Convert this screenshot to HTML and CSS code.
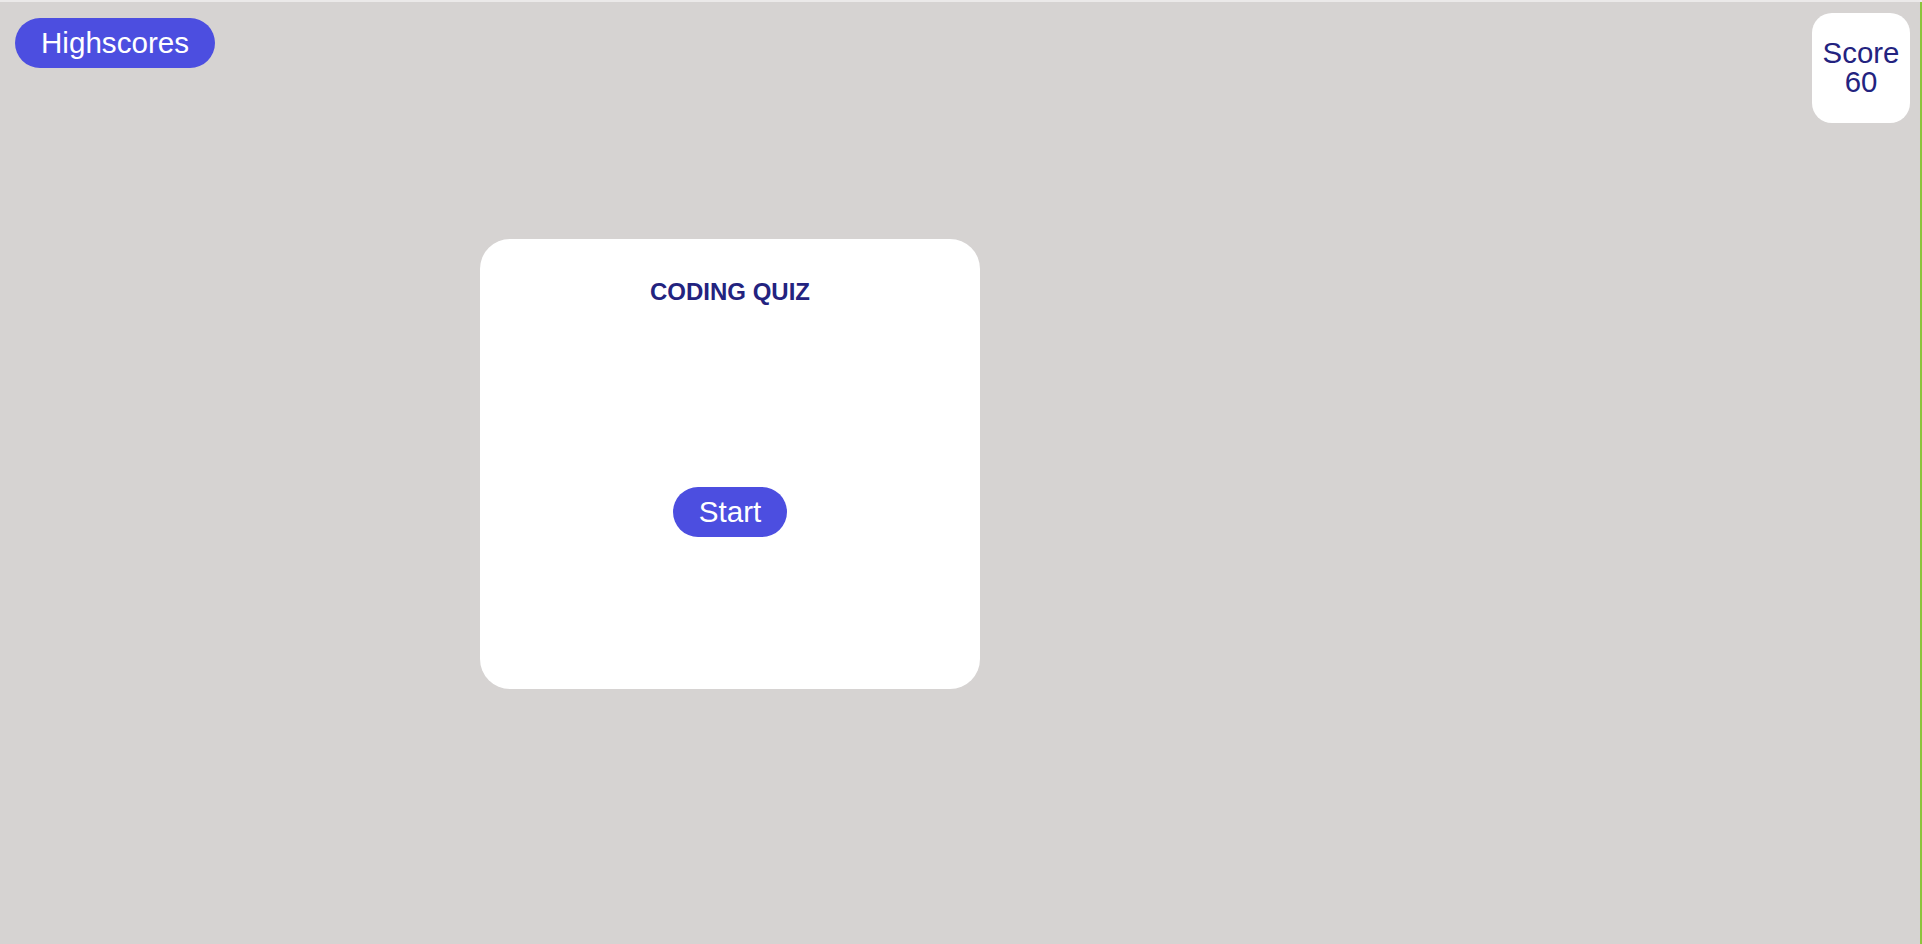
FILE: index.html
```html
<!DOCTYPE html>
<html lang="en">
<head>
<meta charset="utf-8">
<title>Coding Quiz</title>
<link rel="stylesheet" href="styles.css">
</head>
<body>
<div class="page">
  <div class="inner">
    <header class="top">
      <button class="pill highscores">Highscores</button>
      <div class="score">
        <span>Score</span>
        <span>60</span>
      </div>
    </header>
    <main class="main">
      <section class="card">
        <h1 class="title">CODING QUIZ</h1>
        <button class="pill start">Start</button>
      </section>
    </main>
  </div>
</div>
</body>
</html>
```
FILE: styles.css
```css
html, body {
  margin: 0;
  padding: 0;
}
body {
  background: #d6d3d2;
  font-family: "Liberation Sans", Arial, sans-serif;
  overflow: hidden;
}
.page {
  border-top: 2px solid #ebe9e9;
}
.inner {
  border-right: 2px solid #8cc43c;
  min-height: 942px;
  box-sizing: border-box;
}
.top {
  display: flex;
  justify-content: space-between;
  align-items: flex-start;
  padding: 11px 10px 0 15px;
}
.pill {
  background: #4c4ee0;
  color: #ffffff;
  border: none;
  border-radius: 25px;
  height: 50px;
  padding: 0 26px;
  font-family: "Liberation Sans", Arial, sans-serif;
  font-size: 29.6px;
  line-height: 1;
  cursor: pointer;
}
.highscores {
  margin-top: 5px;
}
.score {
  width: 98px;
  height: 110px;
  background: #ffffff;
  border-radius: 20px;
  display: flex;
  flex-direction: column;
  align-items: center;
  justify-content: center;
  padding-bottom: 2px;
  box-sizing: border-box;
  color: #23237f;
  font-size: 29.4px;
  line-height: 1;
}
.main {
  padding: 116px 0 0 480px;
}
.card {
  width: 500px;
  height: 450px;
  background: #ffffff;
  border-radius: 30px;
  display: flex;
  flex-direction: column;
  align-items: center;
  padding-top: 39px;
  box-sizing: border-box;
}
.title {
  margin: 0;
  font-size: 24px;
  font-weight: bold;
  color: #23237f;
}
.start {
  margin-top: 181px;
}
```
